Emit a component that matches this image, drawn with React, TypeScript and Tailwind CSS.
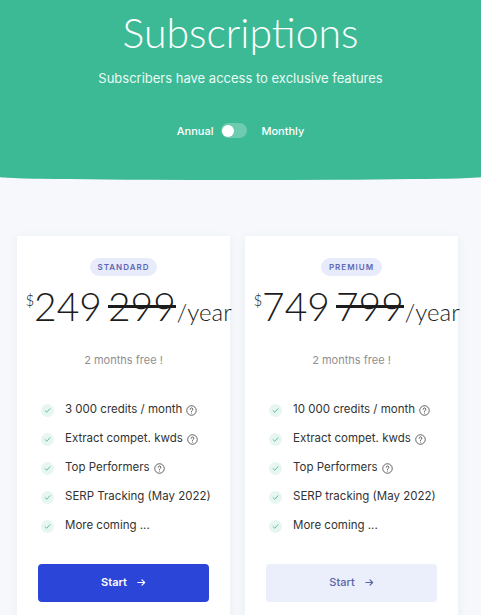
import React from 'react';

interface Plan {
  name: string;
  price: string;
  old: string;
  features: { label: string; help: boolean }[];
  primary: boolean;
}

const plans: Plan[] = [
  {
    name: 'STANDARD',
    price: '249',
    old: '299',
    primary: true,
    features: [
      { label: '3 000 credits / month', help: true },
      { label: 'Extract compet. kwds', help: true },
      { label: 'Top Performers', help: true },
      { label: 'SERP Tracking (May 2022)', help: false },
      { label: 'More coming ...', help: false },
    ],
  },
  {
    name: 'PREMIUM',
    price: '749',
    old: '799',
    primary: false,
    features: [
      { label: '10 000 credits / month', help: true },
      { label: 'Extract compet. kwds', help: true },
      { label: 'Top Performers', help: true },
      { label: 'SERP tracking (May 2022)', help: false },
      { label: 'More coming ...', help: false },
    ],
  },
];

const Check = () => (
  <span className="flex h-[13px] w-[13px] shrink-0 items-center justify-center rounded-full bg-[#e7f6f0]">
    <svg width="7" height="7" viewBox="0 0 10 10" fill="none">
      <path d="M1.5 5.2 4 7.5 8.5 2.5" stroke="#5cc19c" strokeWidth="1.4" strokeLinecap="round" strokeLinejoin="round" />
    </svg>
  </span>
);

const Help = () => (
  <svg width="11" height="11" viewBox="0 0 12 12" fill="none" className="ml-[4px] inline-block">
    <circle cx="6" cy="6" r="5.2" stroke="#444" strokeWidth="0.9" />
    <path d="M4.5 4.7a1.5 1.5 0 1 1 2.1 1.4c-.4.2-.6.5-.6.9v.2" stroke="#444" strokeWidth="0.9" strokeLinecap="round" />
    <circle cx="6" cy="8.7" r="0.55" fill="#444" />
  </svg>
);

const Arrow = ({ color }: { color: string }) => (
  <svg width="9" height="9" viewBox="0 0 10 10" fill="none" className="ml-[10px]">
    <path d="M1 5h7.5M5.5 2l3 3-3 3" stroke={color} strokeWidth="1.3" strokeLinecap="round" strokeLinejoin="round" />
  </svg>
);

const PlanCard = ({ plan }: { plan: Plan }) => (
  <div className="flex w-[213px] shrink-0 flex-col items-center bg-white px-[21px] pt-[22px] pb-[14px] shadow-[0_2px_10px_rgba(40,60,90,0.06)]">
    <span className="rounded-full bg-[#e8ebfa] px-[8px] py-[3px] text-[8px] font-semibold tracking-[1px] text-[#5c67b5]">
      {plan.name}
    </span>
    <div className="mt-[10px] flex items-baseline whitespace-nowrap pl-[10px] font-['Lato',sans-serif] text-[#1c1c1c]">
      <span className="self-start pt-[3px] text-[15px] font-light">$</span>
      <span className="text-[39px] leading-[40px] font-light">{plan.price}</span>
      <span className="relative ml-[6px] text-[39px] leading-[40px] font-light">
        {plan.old}
        <span className="absolute left-0 right-0 top-[19px] h-[3px] bg-[#1c1c1c]" />
      </span>
      <span className="ml-[1px] text-[24px] font-light">/year</span>
    </div>
    <p className="mt-[22px] text-[11px] text-[#8f8f8f]">2 months free !</p>
    <ul className="mt-[33px] flex w-full flex-col gap-[12px] pl-[3px]">
      {plan.features.map((f) => (
        <li key={f.label} className="flex h-[17px] items-center gap-[11px] whitespace-nowrap text-[11.5px] text-[#333]">
          <Check />
          <span className="flex items-center">
            {f.label}
            {f.help && <Help />}
          </span>
        </li>
      ))}
    </ul>
    {plan.primary ? (
      <button className="mt-[29px] flex h-[38px] w-full items-center justify-center rounded-[4px] bg-[#2b45d9] text-[11px] font-semibold text-white">
        Start
        <Arrow color="#ffffff" />
      </button>
    ) : (
      <button className="mt-[29px] flex h-[38px] w-full items-center justify-center rounded-[4px] bg-[#eaeffb] text-[11px] font-medium text-[#5b64a6]">
        Start
        <Arrow color="#5b64a6" />
      </button>
    )}
  </div>
);

export default function App() {
  return (
    <div className="h-[615px] w-[481px] overflow-hidden bg-[#f6f8fb] font-['Inter',sans-serif]">
      <header className="flex h-[180px] flex-col items-center rounded-b-[50%_3px] bg-[#3cba95] text-white">
        <h1 className="mt-[9px] font-['Lato',sans-serif] text-[41px] leading-[48px] font-light">Subscriptions</h1>
        <p className="mt-[12px] text-[13px] text-[#eafaf4]">Subscribers have access to exclusive features</p>
        <div className="mt-[34px] flex items-center text-[11px] font-medium">
          <span>Annual</span>
          <span className="ml-[8px] flex h-[15px] w-[26px] items-center rounded-full bg-white/25 px-[1px]">
            <span className="h-[12px] w-[12px] rounded-full bg-white" />
          </span>
          <span className="ml-[14px]">Monthly</span>
        </div>
      </header>
      <main className="mt-[56px] flex gap-[15px] pl-[17px]">
        {plans.map((p) => (
          <PlanCard key={p.name} plan={p} />
        ))}
      </main>
    </div>
  );
}
